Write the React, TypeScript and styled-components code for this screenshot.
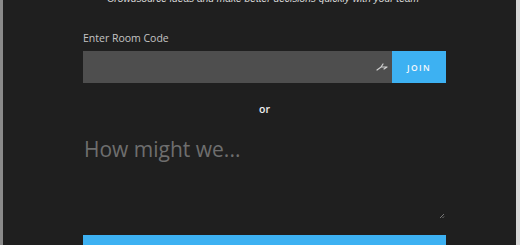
import React from "react";
import styled, { createGlobalStyle } from "styled-components";

const Global = createGlobalStyle`
  html, body { margin: 0; padding: 0; background: #1f1f1f; }
  body { font-family: "Open Sans", "Liberation Sans", sans-serif; overflow: hidden; }
`;

const Frame = styled.div`
  width: 520px;
  height: 245px;
  box-sizing: border-box;
  background: #1f1f1f;
  border-left: 3px solid #8a8a8a;
  border-right: 4px solid #d8d8d8;
  overflow: hidden;
  display: flex;
  flex-direction: column;
  align-items: center;
`;

const Tagline = styled.p`
  margin: -8px 0 0 7px;
  font-family: "Liberation Sans", Arial, sans-serif;
  font-size: 10.2px;
  line-height: 13px;
  font-style: italic;
  color: #d6d6d6;
  text-align: center;
  white-space: nowrap;
`;

const Column = styled.div`
  width: 363px;
  margin-left: 10px;
  display: flex;
  flex-direction: column;
`;

const Label = styled.label`
  margin-top: 26px;
  font-size: 10.5px;
  line-height: 14px;
  color: #c4c4c4;
`;

const JoinRow = styled.div`
  margin-top: 6px;
  display: flex;
  height: 32px;
`;

const CodeBox = styled.div`
  flex: 1;
  background: #4e4e4e;
  position: relative;
`;

const Glyph = styled.svg`
  position: absolute;
  right: 4px;
  top: 11px;
`;

const JoinButton = styled.button`
  width: 54px;
  border: none;
  background: #3db1f2;
  color: #f4f8fb;
  font-family: inherit;
  font-size: 8.5px;
  font-weight: 600;
  letter-spacing: 1.4px;
  padding: 0;
`;

const Or = styled.div`
  margin-top: 19px;
  text-align: center;
  font-size: 10.5px;
  font-weight: 600;
  color: #f0f0f0;
`;

const Question = styled.div`
  margin-top: 19px;
  height: 84px;
  position: relative;
  font-size: 21px;
  line-height: 28px;
  color: #6e6e6e;
  padding-left: 1px;
`;

const Grip = styled.svg`
  position: absolute;
  right: 1px;
  bottom: 0px;
`;

const StartButton = styled.div`
  margin-top: 16px;
  height: 20px;
  background: #3db1f2;
`;

export default function App() {
  return (
    <Frame>
      <Global />
      <Tagline>Crowdsource ideas and make better decisions quickly with your team</Tagline>
      <Column>
        <Label>Enter Room Code</Label>
        <JoinRow>
          <CodeBox>
            <Glyph width="12" height="10" viewBox="0 0 12 10">
              <path d="M1 8 L5 5 L11 5 M5 5 L7 2 M8 7 L11 5" stroke="#cfcfcf" strokeWidth="1.2" fill="none" strokeLinecap="round" />
            </Glyph>
          </CodeBox>
          <JoinButton>JOIN</JoinButton>
        </JoinRow>
        <Or>or</Or>
        <Question>
          How might we...
          <Grip width="6" height="6" viewBox="0 0 6 6">
            <path d="M5 1 L1 5 M5 3.5 L3.5 5" stroke="#777" strokeWidth="1" />
          </Grip>
        </Question>
        <StartButton />
      </Column>
    </Frame>
  );
}
